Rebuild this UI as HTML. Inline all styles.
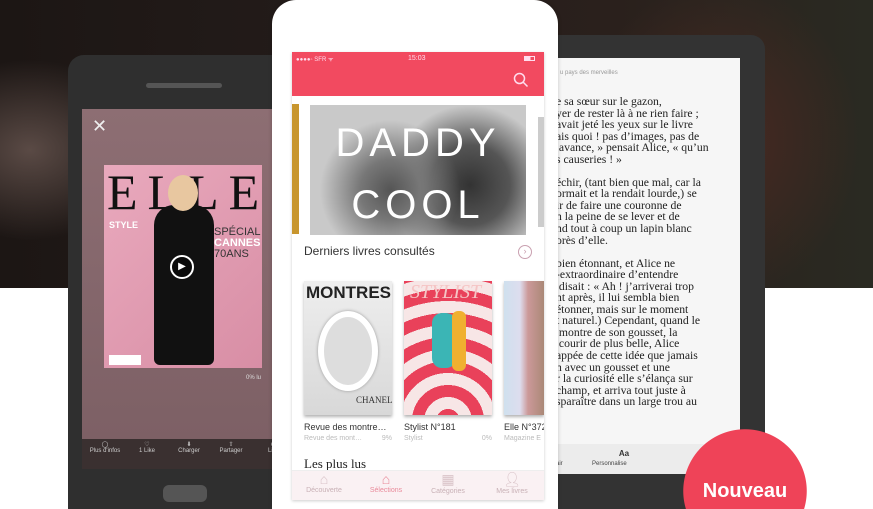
<!DOCTYPE html>
<html><head><meta charset="utf-8"><style>
*{margin:0;padding:0;box-sizing:border-box}
html,body{width:873px;height:509px;overflow:hidden}
body{position:relative;background:#fff;font-family:"Liberation Sans",sans-serif}
#w{position:absolute;left:0;top:0;width:873px;height:509px;overflow:hidden}
.abs{position:absolute}
.bg{left:0;top:0;width:873px;height:288px;background:radial-gradient(ellipse 120px 90px at 30px 150px,#5a4a45 0%,rgba(60,45,40,0) 100%),radial-gradient(ellipse 140px 160px at 720px 140px,#4a2a22 0%,rgba(40,25,20,0) 100%),linear-gradient(90deg,#1c1614 0%,#241c1a 40%,#2a201c 70%,#2a2a22 100%)}
.book{font-family:"Liberation Serif",serif;font-size:11.7px;line-height:11.55px;color:#222;white-space:pre}
.tab{font-size:7px;color:#c8b0b5;text-align:center;width:60px}
</style></head><body><div id="w">
<div class="abs bg"></div>

<!-- left phone -->
<div class="abs" style="left:68px;top:55px;width:240px;height:454px;background:#2f2f2f;border-radius:16px 16px 0 0"></div>
<div class="abs" style="left:146px;top:83px;width:76px;height:5px;background:#555;border-radius:3px"></div>
<div class="abs" style="left:82px;top:109px;width:200px;height:330px;background:linear-gradient(#8d6e73,#7d6065)"></div>
<div class="abs" style="left:92px;top:116px;color:#eee;font-size:18px">✕</div>
<div class="abs" style="left:104px;top:165px;width:158px;height:203px;overflow:hidden;background:linear-gradient(135deg,#e9a9bd,#d88ea5)">
  <div class="abs" style="left:3px;top:2px;font-family:'Liberation Serif',serif;font-size:50px;color:#111;letter-spacing:10px;line-height:50px">ELLE</div>
  <div class="abs" style="left:50px;top:40px;width:60px;height:160px;background:#111;border-radius:20px 20px 6px 6px"></div>
  <div class="abs" style="left:64px;top:10px;width:30px;height:36px;background:#e8c7a0;border-radius:50%"></div>
  <div class="abs" style="left:110px;top:62px;font-size:11px;color:#333;line-height:11px">SPÉCIAL<br><b style="color:#fff">CANNES</b><br>70ANS</div>
  <div class="abs" style="left:5px;top:55px;font-size:9px;color:#fff;font-weight:bold">STYLE</div>
  <div class="abs" style="left:5px;top:190px;width:32px;height:10px;background:#fff"></div>
  <div class="abs" style="left:66px;top:90px;width:24px;height:24px;border:2px solid #fff;border-radius:50%;background:rgba(0,0,0,.4);color:#fff;font-size:10px;text-align:center;line-height:20px">▶</div>
</div>
<div class="abs" style="left:246px;top:375px;font-size:6px;color:#ddd">0% lu</div>
<div class="abs" style="left:82px;top:439px;width:200px;height:30px;background:#3a3030"></div>
<div class="abs" style="left:84px;top:441px;font-size:6px;color:#ccc;display:flex;gap:0">
  <div style="width:42px;text-align:center">◯<br>Plus d'infos</div><div style="width:42px;text-align:center">♡<br>1 Like</div><div style="width:42px;text-align:center">⬇<br>Charger</div><div style="width:42px;text-align:center">⇧<br>Partager</div><div style="width:42px;text-align:center">⊕<br>Lire</div>
</div>
<div class="abs" style="left:163px;top:485px;width:44px;height:17px;background:#555;border-radius:6px"></div>

<!-- right tablet -->
<div class="abs" style="left:540px;top:35px;width:225px;height:474px;background:#333;border-radius:14px 14px 0 0"></div>
<div class="abs" style="left:556px;top:58px;width:184px;height:416px;background:#f6f6f6;overflow:hidden">
  <div class="abs" style="left:4px;top:12px;font-size:6px;color:#999">u pays des merveilles</div>
  <div class="abs book" style="left:0;top:38px">e sa sœur sur le gazon,
yer de rester là à ne rien faire ;
avait jeté les yeux sur le livre
ais quoi ! pas d’images, pas de
 avance, » pensait Alice, « qu’un
s causeries ! »

échir, (tant bien que mal, car la
ormait et la rendait lourde,) se
ir de faire une couronne de
n la peine de se lever et de
nd tout à coup un lapin blanc
orès d’elle.

bien étonnant, et Alice ne
-extraordinaire d’entendre
 disait : « Ah ! j’arriverai trop
nt après, il lui sembla bien
étonner, mais sur le moment
t naturel.) Cependant, quand le
 montre de son gousset, la
 courir de plus belle, Alice
appée de cette idée que jamais
n avec un gousset et une
r la curiosité elle s’élança sur
champ, et arriva tout juste à
sparaître dans un large trou au</div>
  <div class="abs" style="left:0;top:386px;width:184px;height:30px;background:#ececec"></div>
  <div class="abs" style="left:48px;top:391px;font-size:8px;font-weight:bold;color:#333;width:40px;text-align:center">Aa</div>
  <div class="abs" style="left:36px;top:403px;font-size:6px;color:#444">Personnalise</div>
  <div class="abs" style="left:0;top:403px;font-size:6px;color:#444">air</div>
</div>

<!-- middle phone -->
<div class="abs" style="left:272px;top:0;width:286px;height:509px;background:#fff;border-radius:24px 24px 0 0;box-shadow:0 0 4px rgba(0,0,0,.2)"></div>
<div class="abs" style="left:292px;top:52px;width:252px;height:448px;background:#fff;overflow:hidden;box-shadow:0 1px 3px rgba(0,0,0,.2)">
  <div class="abs" style="left:0;top:0;width:252px;height:44px;background:#f24a60"></div>
  <div class="abs" style="left:4px;top:3px;font-size:6px;color:#fde">●●●●◦ SFR ᯤ</div>
  <div class="abs" style="left:116px;top:3px;font-size:7px;color:#fde">15:03</div>
  <div class="abs" style="left:232px;top:4px;width:11px;height:5px;border:1px solid #fde;background:linear-gradient(90deg,#fde 60%,transparent 60%)"></div>
  <svg class="abs" style="left:221px;top:20px" width="16" height="16" viewBox="0 0 16 16"><circle cx="6.5" cy="6.5" r="5" fill="none" stroke="#fde" stroke-width="1.5"/><path d="M10 10 L14.5 14.5" stroke="#fde" stroke-width="1.5"/></svg>
  <div class="abs" style="left:0;top:52px;width:7px;height:130px;background:#c8962e"></div>
  <div class="abs" style="left:18px;top:53px;width:216px;height:130px;background:radial-gradient(circle at 80px 85px,#555 0,#777 30px,rgba(0,0,0,0) 70px),radial-gradient(circle at 160px 80px,#333 0,#555 40px,rgba(0,0,0,0) 80px),#c9c9c9"></div>
  <div class="abs" style="left:246px;top:65px;width:6px;height:110px;background:#ccc"></div>
  <div class="abs" style="left:18px;top:60px;width:216px;text-align:center;font-size:40px;color:#fff;letter-spacing:5px;line-height:62px">DADDY<br>COOL</div>
  <div class="abs" style="left:12px;top:192px;font-size:12px;color:#333">Derniers livres consultés</div>
  <div class="abs" style="left:226px;top:193px;width:14px;height:14px;border:1.5px solid #c9a0b0;border-radius:50%;font-size:9px;color:#c9a0b0;text-align:center;line-height:11px">›</div>
  <div class="abs" style="left:12px;top:229px;width:88px;height:134px;background:linear-gradient(#eee,#d8d8d8);box-shadow:0 2px 3px rgba(0,0,0,.3)">
    <div style="font-size:17px;font-weight:bold;color:#222;padding:2px 0 0 2px">MONTRES</div>
    <div class="abs" style="left:14px;top:30px;width:60px;height:80px;border:6px solid #fff;border-radius:50%;background:#ddd;box-shadow:0 0 3px #999"></div>
    <div class="abs" style="left:52px;top:114px;font-family:'Liberation Serif',serif;font-size:9px;color:#333">CHANEL</div>
  </div>
  <div class="abs" style="left:112px;top:229px;width:88px;height:134px;background:repeating-radial-gradient(circle at 44px 140px,#e9415a 0,#e9415a 12px,#f7e6e6 12px,#f7e6e6 24px);box-shadow:0 2px 3px rgba(0,0,0,.3)">
    <div style="font-family:'Liberation Serif',serif;font-style:italic;font-size:20px;color:#f5c5c5;padding-left:6px">STYLIST</div>
    <div class="abs" style="left:28px;top:32px;width:24px;height:55px;background:#3bb5b5;border-radius:10px"></div>
    <div class="abs" style="left:48px;top:30px;width:14px;height:60px;background:#f0b030;border-radius:6px"></div>
  </div>
  <div class="abs" style="left:212px;top:229px;width:40px;height:134px;background:linear-gradient(90deg,#cfe0ee 0,#dde 40%,#c99 60%,#a87 100%);box-shadow:0 2px 3px rgba(0,0,0,.3)"></div>
  <div class="abs" style="left:12px;top:370px;font-size:9px;color:#333">Revue des montre…</div>
  <div class="abs" style="left:12px;top:383px;font-size:7px;color:#bbb;width:88px">Revue des mont…<span style="float:right">9%</span></div>
  <div class="abs" style="left:112px;top:370px;font-size:9px;color:#333">Stylist N°181</div>
  <div class="abs" style="left:112px;top:383px;font-size:7px;color:#bbb;width:88px">Stylist<span style="float:right">0%</span></div>
  <div class="abs" style="left:212px;top:370px;font-size:9px;color:#333;white-space:nowrap">Elle N°372</div>
  <div class="abs" style="left:212px;top:383px;font-size:7px;color:#bbb;white-space:nowrap">Magazine E</div>
  <div class="abs" style="left:12px;top:404px;font-family:'Liberation Serif',serif;font-size:13px;color:#222">Les plus lus</div>
  <div class="abs" style="left:0;top:418px;width:252px;height:30px;background:rgba(250,240,242,.95);border-top:1px solid #eee"></div>
  <div class="abs tab" style="left:2px;top:419px"><div style="font-size:14px;color:#d9c3c8">⌂</div>Découverte</div>
  <div class="abs tab" style="left:64px;top:419px;color:#e98a9a"><div style="font-size:14px">⌂</div>Sélections</div>
  <div class="abs tab" style="left:126px;top:419px"><div style="font-size:14px;color:#d9c3c8">▦</div>Catégories</div>
  <div class="abs tab" style="left:190px;top:419px"><div style="font-size:14px;color:#d9c3c8">👤︎</div>Mes livres</div>
</div>

<!-- Nouveau -->
<div class="abs" style="left:683px;top:429px;width:124px;height:80px;background:radial-gradient(circle 62px at 62px 62px,#ef4358 61.5px,rgba(239,67,88,0) 62px)"></div>
<div class="abs" style="left:683px;top:479px;width:124px;height:24px;line-height:24px;text-align:center;color:#fff;font-weight:bold;font-size:20px">Nouveau</div>
</div></body></html>
